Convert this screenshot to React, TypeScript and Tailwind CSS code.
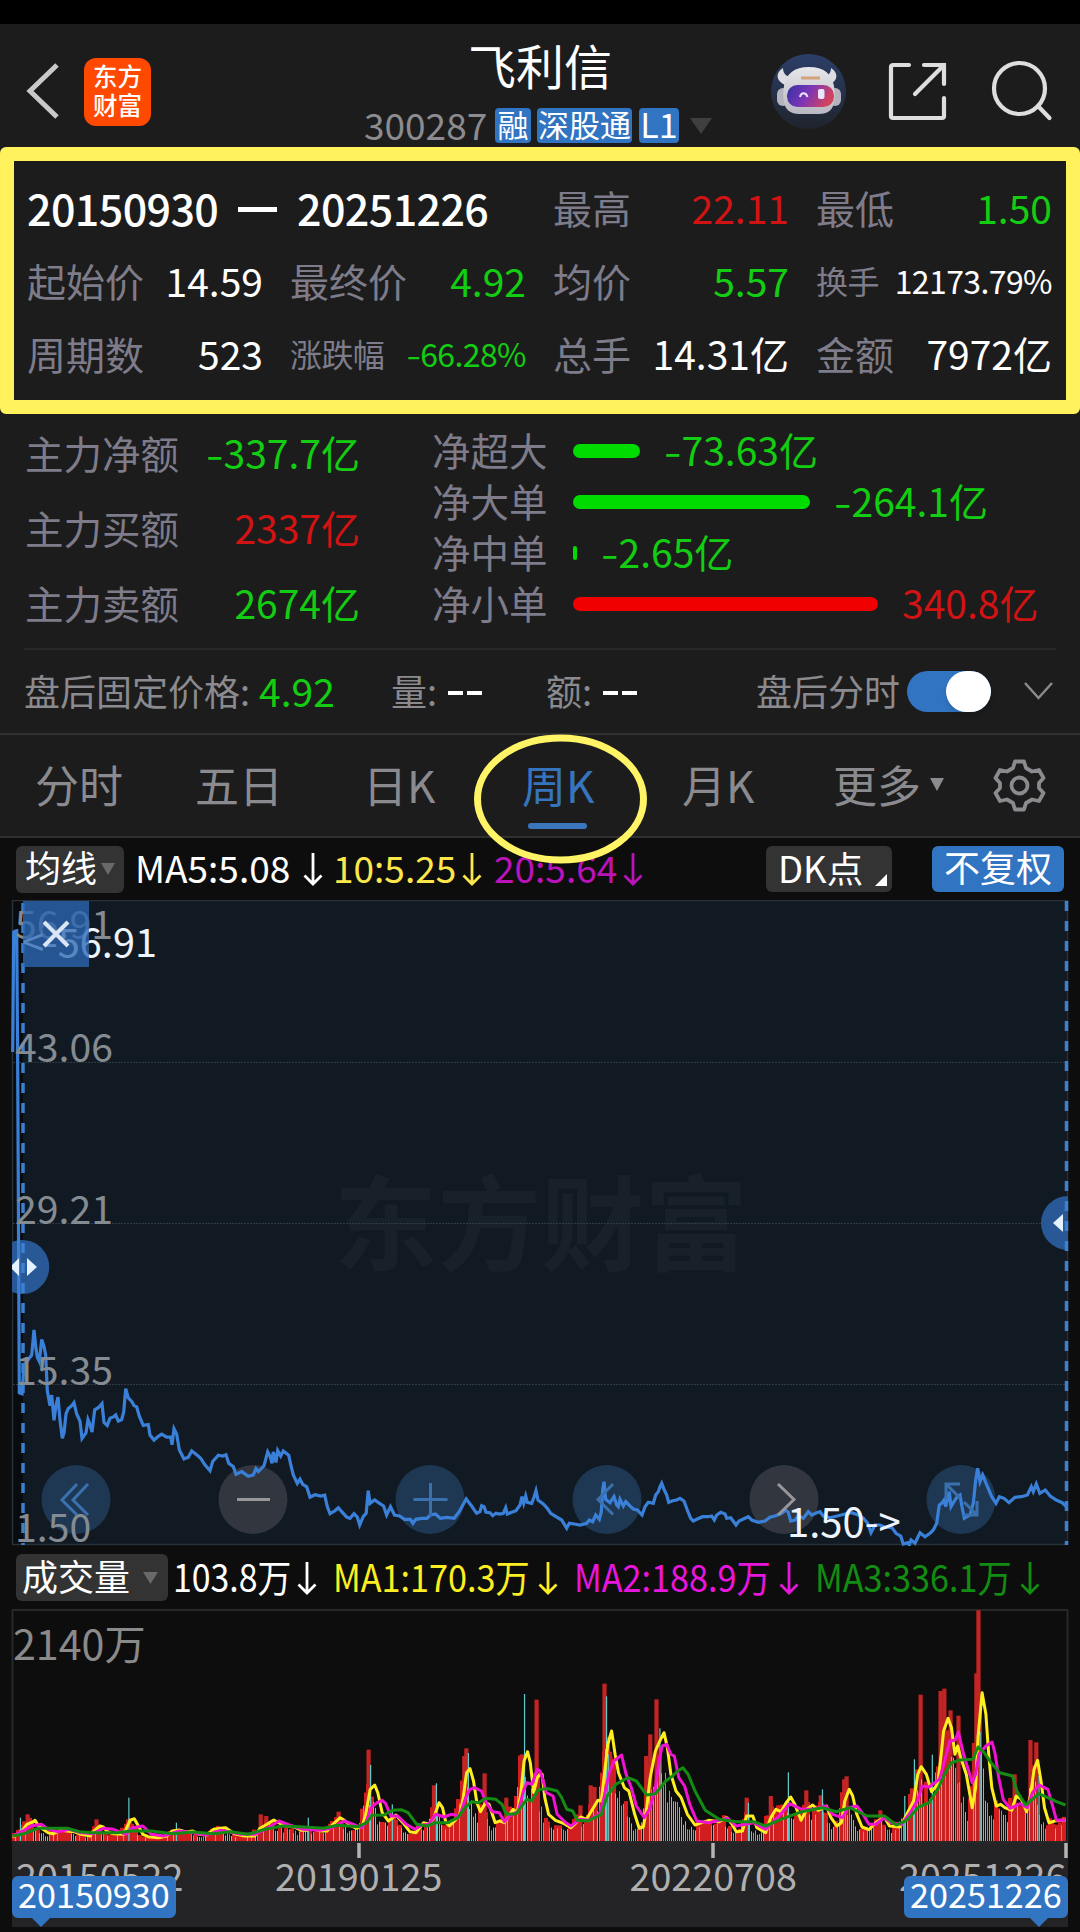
import React from 'react';

type Pt = [number, number];
type Segment = { ox: number; oy: number; sx: number; sy: number; data: number[] };

// every segment keeps its own origin and scale, this puts them all on the canvas
const toPoints = (segments: Segment[]): Pt[] => {
    const out: Pt[] = [];
    segments.forEach(s => {
        for (let i = 0; i < s.data.length; i += 2) {
            out.push([s.ox + s.data[i] / s.sx, s.oy + s.data[i + 1] / s.sy]);
        }
    });
    return out;
};

const toLine = (pts: Pt[]) => pts.map(p => `${p[0].toFixed(1)},${p[1].toFixed(1)}`).join(' ');

const price = toPoints([
    {
        ox: 0, oy: 890, sx: 3, sy: 2.376,
        data: [
            38, 385, 41, 100, 45, 98, 50, 97, 53, 420, 58, 1195, 66, 1197, 72, 1130, 80, 1120, 90, 1110, 95, 1105, 102, 1045, 108, 1090, 112, 1110,
            118, 1120, 125, 1068, 132, 1085, 137, 1105, 142, 1190, 150, 1225, 155, 1200, 162, 1260, 168, 1225, 174, 1205, 180, 1260, 187, 1303,
            192, 1290, 198, 1245, 205, 1232, 215, 1225, 222, 1218, 230, 1245, 240, 1262, 246, 1303, 258, 1290, 264, 1258, 270, 1270, 276, 1288,
            284, 1235, 295, 1230, 306, 1220, 312, 1265, 322, 1272, 330, 1255, 340, 1252, 347, 1247, 355, 1262, 365, 1258, 371, 1240, 377, 1185,
            385, 1207, 395, 1215, 402, 1225, 410, 1228, 418, 1250, 430, 1272, 445, 1270, 450, 1295, 462, 1307, 475, 1298, 485, 1293, 500, 1300,
            512, 1300, 516, 1318, 522, 1280, 530, 1293, 538, 1330, 552, 1352, 565, 1348, 575, 1333, 590, 1342, 602, 1350, 614, 1365, 630, 1380,
            638, 1358, 655, 1343, 668, 1345, 678, 1342, 686, 1362, 700, 1370, 708, 1388, 725, 1382, 745, 1393, 760, 1390, 768, 1375, 775, 1382,
            792, 1368, 803, 1335, 810, 1345, 816, 1362, 820, 1335, 828, 1360, 833, 1332, 842, 1345, 850, 1333, 866, 1343, 872, 1365, 880, 1390,
            892, 1410, 900, 1400, 908, 1412, 920, 1418, 930, 1443, 945, 1437, 962, 1440, 974, 1438, 982, 1465, 990, 1482, 1005, 1475, 1015, 1468,
            1025, 1477, 1040, 1490, 1050, 1493, 1062, 1482, 1072, 1490,
        ],
    },
    {
        ox: 300, oy: 1400, sx: 2.01, sy: 3,
        data: [
            120, 375, 127, 350, 133, 340, 137, 272, 141, 310, 150, 300, 160, 310, 168, 318, 174, 345, 182, 320, 190, 345, 200, 348, 210, 358,
            222, 358, 227, 370, 233, 358, 245, 355, 255, 355, 262, 345, 272, 342, 282, 355, 295, 352, 310, 355, 320, 335, 334, 297, 345, 318,
            355, 340,
        ],
    },
    {
        ox: 480, oy: 1440, sx: 3, sy: 3,
        data: [
            0, 215, 5, 197, 12, 200, 18, 217, 30, 218, 38, 227, 48, 220, 60, 222, 70, 220, 77, 203, 82, 222, 95, 217, 108, 212, 120, 195,
            126, 170, 131, 190, 137, 168, 142, 187, 155, 190, 162, 172, 168, 152, 174, 180, 190, 192, 202, 205, 212, 220, 228, 230, 245, 240,
            260, 265, 268, 250, 283, 252, 300, 255, 320, 250, 328, 240, 338, 245, 347, 225, 353, 232, 358, 238, 364, 215, 368, 150, 372, 125,
            377, 178, 390, 188, 402, 170, 410, 195, 415, 200, 420, 178, 430, 198, 437, 185, 450, 198, 460, 207, 472, 210, 486, 225, 495, 200,
            505, 187, 520, 190, 527, 165, 535, 155, 540, 140, 545, 130, 553, 150, 560, 165, 566, 187, 578, 182, 590, 180, 600, 175, 612, 183,
            622, 210, 632, 235, 640, 243, 652, 237, 668, 230, 685, 230, 695, 228, 703, 240, 710, 225, 722, 217, 735, 222, 740, 235, 752, 233,
            768, 255, 777, 243, 795, 235, 805, 230, 815, 240, 835, 247, 855, 243, 870, 232, 885, 228, 905, 220, 917, 210, 925, 217, 932, 243,
            945, 240, 955, 227, 970, 235, 985, 215, 995, 225, 1010, 218, 1020, 215, 1030, 228, 1050, 233, 1075, 227, 1095, 222, 1115, 218,
            1135, 225, 1150, 235, 1163, 250, 1173, 278, 1185, 255, 1200, 255, 1215, 262, 1235, 262, 1248, 280, 1262, 288, 1270, 312, 1283, 308,
            1288, 315, 1293, 300, 1305, 310, 1320, 278, 1335, 290, 1350, 280, 1360, 270, 1370, 250, 1378, 195, 1385, 190, 1392, 180, 1397, 200,
            1408, 155, 1413, 200, 1422, 185, 1432, 170, 1440, 165, 1446, 200, 1453, 235, 1470, 225, 1480, 190, 1487, 120, 1493, 85, 1500, 125,
            1508, 105, 1520, 135, 1535, 170, 1548, 190, 1558, 170,
        ],
    },
    {
        ox: 300, oy: 1400, sx: 2.01, sy: 3,
        data: [
            1415, 295, 1425, 308, 1437, 292, 1450, 290, 1462, 285, 1470, 260, 1474, 275, 1480, 252, 1487, 280, 1498, 270, 1508, 288,
            1520, 300, 1532, 308, 1541, 320,
        ],
    },
]);

// volume pane is split in a left and a right half
const volume = (left: number[], right: number[]) => toPoints([
    { ox: 0, oy: 1540, sx: 2.904, sy: 3, data: left },
    { ox: 540, oy: 1540, sx: 2.904, sy: 3, data: right },
]);

const ma1 = volume(
    [
        36, 888, 60, 875, 78, 850, 95, 843, 102, 838, 110, 852, 125, 865, 140, 875, 155, 878, 175, 868, 195, 870, 215, 872, 235, 880, 262, 885,
        275, 868, 290, 855, 300, 858, 312, 872, 330, 878, 360, 880, 368, 860, 378, 838, 390, 833, 402, 855, 415, 880, 430, 887, 460, 890,
        485, 885, 500, 870, 520, 867, 540, 873, 560, 870, 580, 880, 600, 882, 620, 865, 640, 862, 655, 860, 680, 878, 710, 885, 740, 885,
        755, 862, 775, 850, 795, 837, 815, 848, 835, 855, 855, 858, 875, 868, 890, 868, 905, 860, 930, 870, 950, 870, 965, 852, 988, 830,
        1000, 838, 1015, 852, 1035, 862, 1052, 855, 1062, 820, 1075, 745, 1088, 732, 1097, 755, 1110, 815, 1128, 840, 1150, 822, 1170, 845,
        1190, 872, 1208, 875, 1230, 845, 1245, 850, 1260, 830, 1275, 785, 1285, 800, 1295, 845, 1305, 855, 1320, 840, 1335, 820, 1345, 770,
        1355, 695, 1365, 683, 1375, 720, 1385, 785, 1395, 812, 1410, 785, 1420, 790, 1438, 845, 1452, 840, 1465, 845, 1478, 825, 1490, 805,
        1502, 815, 1512, 760, 1522, 660, 1532, 632, 1540, 665, 1550, 755, 1560, 710,
    ],
    [
        0, 700, 6, 700, 14, 770, 25, 820, 45, 838, 70, 848, 90, 860, 105, 845, 118, 828, 135, 835, 155, 800, 168, 778, 178, 780, 187, 700,
        197, 610, 208, 570, 218, 640, 228, 695, 245, 740, 258, 750, 275, 820, 288, 862, 300, 858, 310, 800, 320, 710, 335, 630, 348, 600,
        360, 575, 370, 620, 380, 700, 395, 750, 410, 770, 428, 820, 450, 852, 470, 845, 490, 838, 520, 842, 543, 830, 558, 850, 570, 872,
        588, 870, 600, 825, 618, 825, 630, 860, 655, 875, 670, 830, 685, 805, 700, 812, 715, 785, 728, 768, 740, 790, 758, 838, 775, 805,
        792, 792, 808, 808, 832, 795, 845, 830, 862, 855, 875, 845, 885, 780, 898, 745, 908, 765, 920, 820, 935, 858, 955, 866, 975, 845,
        1000, 828, 1015, 855, 1045, 858, 1060, 830, 1085, 780, 1097, 700, 1107, 677, 1122, 700, 1137, 752, 1155, 730, 1165, 640, 1172, 570,
        1185, 532, 1195, 560, 1205, 640, 1213, 615, 1222, 650, 1238, 700, 1255, 800, 1265, 740, 1272, 590, 1284, 455, 1295, 520, 1303, 640,
        1312, 740, 1325, 795, 1338, 790, 1350, 800, 1370, 808, 1383, 765, 1398, 775, 1413, 812, 1425, 760, 1435, 685, 1445, 658, 1455, 720,
        1465, 800, 1478, 845, 1495, 840, 1510, 838, 1526, 838,
    ],
);

const ma2 = volume(
    [
        36, 885, 70, 868, 90, 855, 120, 850, 140, 865, 170, 872, 200, 865, 235, 875, 270, 878, 300, 862, 330, 865, 365, 880, 385, 860,
        415, 855, 440, 880, 475, 885, 520, 870, 560, 875, 600, 882, 640, 868, 700, 880, 740, 880, 780, 860, 810, 840, 840, 852, 880, 865,
        930, 868, 960, 862, 1000, 840, 1050, 860, 1062, 845, 1078, 800, 1095, 785, 1110, 778, 1120, 788, 1135, 825, 1155, 825, 1180, 850,
        1205, 865, 1225, 852, 1245, 850, 1265, 820, 1290, 828, 1310, 820, 1335, 825, 1352, 770, 1365, 745, 1378, 740, 1398, 750, 1412, 785,
        1430, 812, 1450, 815, 1465, 842, 1480, 825, 1505, 810, 1520, 750, 1530, 725, 1545, 730, 1560, 685,
    ],
    [
        0, 690, 8, 715, 18, 755, 38, 765, 50, 820, 75, 845, 90, 855, 115, 835, 145, 838, 175, 815, 188, 760, 200, 700, 215, 660, 237, 642,
        250, 700, 265, 740, 280, 795, 303, 830, 320, 800, 335, 740, 345, 665, 355, 615, 368, 610, 380, 640, 390, 645, 403, 710, 420, 735,
        435, 790, 455, 840, 490, 845, 545, 832, 570, 855, 620, 845, 655, 865, 690, 830, 725, 788, 760, 805, 795, 805, 830, 795, 850, 820,
        878, 830, 895, 800, 920, 795, 935, 815, 955, 850, 975, 850, 1000, 830, 1020, 845, 1050, 850, 1075, 815, 1098, 775, 1110, 735,
        1130, 738, 1160, 715, 1175, 660, 1190, 600, 1205, 598, 1215, 573, 1230, 640, 1255, 725, 1265, 700, 1275, 640, 1295, 615, 1313, 603,
        1322, 640, 1332, 710, 1345, 775, 1365, 802, 1395, 788, 1415, 800, 1430, 755, 1450, 732, 1475, 745, 1490, 800, 1500, 838, 1526, 838,
    ],
);

const ma3 = volume(
    [
        36, 885, 70, 878, 110, 862, 150, 862, 195, 862, 230, 872, 270, 875, 340, 875, 380, 870, 440, 870, 500, 878, 560, 873, 620, 878,
        670, 872, 720, 880, 770, 865, 820, 855, 870, 857, 940, 862, 980, 853, 1040, 857, 1065, 845, 1080, 823, 1115, 822, 1140, 808,
        1165, 806, 1185, 815, 1210, 850, 1240, 855, 1265, 845, 1300, 845, 1330, 830, 1350, 800, 1370, 782, 1390, 785, 1410, 772, 1440, 775,
        1458, 790, 1470, 820, 1500, 818, 1515, 795, 1530, 775, 1545, 780, 1560, 750,
    ],
    [
        0, 745, 25, 743, 50, 750, 62, 768, 78, 805, 95, 810, 108, 838, 140, 840, 178, 820, 195, 765, 220, 730, 255, 710, 280, 720, 310, 762,
        335, 758, 365, 720, 385, 705, 400, 690, 415, 680, 430, 700, 450, 750, 480, 808, 520, 835, 570, 842, 620, 842, 655, 855, 700, 835,
        760, 812, 820, 800, 860, 812, 900, 800, 950, 825, 1000, 825, 1035, 852, 1065, 838, 1100, 798, 1130, 785, 1155, 745, 1175, 700,
        1195, 665, 1220, 657, 1257, 655, 1272, 618, 1290, 635, 1310, 665, 1335, 695, 1372, 705, 1385, 750, 1410, 792, 1430, 775, 1448, 758,
        1475, 770, 1500, 782, 1526, 792,
    ],
);

// weeks that stand out from the average
const redSpikes = volume(
    [80, 820, 280, 835, 757, 820, 773, 825, 983, 812, 1070, 626, 1260, 733, 1348, 645, 1354, 622, 1407, 697, 1470, 770, 1516, 640, 1558, 476],
    [
        117, 793, 147, 733, 158, 738, 187, 428, 204, 645, 308, 645, 320, 580, 338, 475, 600, 770, 670, 765, 773, 748, 815, 763, 883, 715,
        890, 706, 988, 808, 1080, 742, 1105, 461, 1163, 450, 1174, 443, 1192, 508, 1215, 524, 1260, 606, 1267, 397, 1273, 208, 1378, 700,
        1424, 597, 1441, 604,
    ],
);
const cyanSpikes = volume(
    [59, 830, 374, 770, 512, 845, 895, 830, 1076, 672, 1139, 790, 1267, 727, 1360, 636, 1523, 459],
    [193, 466, 198, 640, 348, 562, 605, 785, 721, 694, 820, 745, 1059, 765, 1087, 655, 1139, 641, 1278, 572, 1449, 705],
);

const valueAt = (pts: Pt[], x: number) => {
    for (let i = 1; i < pts.length; i++) {
        if (x <= pts[i][0]) {
            const [x0, y0] = pts[i - 1];
            const [x1, y1] = pts[i];
            return y0 + ((y1 - y0) * (x - x0)) / (x1 - x0 || 1);
        }
    }
    return pts[pts.length - 1][1];
};

const noise = (i: number) => {
    const n = Math.sin(i * 12.9898) * 43758.5453;
    return n - Math.floor(n);
};

const bars = Array.from({ length: 526 }, (_, i) => {
    const x = 13 + i * 2;
    const now = 1840 - valueAt(ma1, x);
    const next = 1840 - valueAt(ma1, x + 5);
    const rising = next - now > -1;
    const red = noise(i) < (rising ? 0.62 : 0.3);
    const h = next * (red ? 0.78 + noise(i + 700) * 0.4 : 0.55 + noise(i + 300) * 0.4);
    return { x, h, red };
});

const Arrow = ({ className = "" }: { className?: string }) => (
    <svg className={`h-[34px] w-5 shrink-0 ${className}`} viewBox="0 0 20 34" fill="none" stroke="currentColor" strokeWidth="2.8">
        <path d="M10 1v31M1.5 23.5L10 32l8.5-8.5" />
    </svg>
);

const Down = ({ className = "" }: { className?: string }) => (
    <svg className={`shrink-0 ${className}`} viewBox="0 0 20 16" preserveAspectRatio="none" fill="currentColor">
        <path d="M0 0h20L10 16z" />
    </svg>
);

// negative numbers get a slightly wider minus sign
const Amount = ({ text, className = "" }: { text: string; className?: string }) => (
    <span className={className}>
        {text.startsWith("-") && <span className="mx-0.5 inline-block scale-x-[1.3]">-</span>}
        {text.replace("-", "")}
    </span>
);

const Header = () => (
    <header className="flex h-[123px] items-start">
        <svg className="ml-[26px] mt-[39px] h-[56px] w-[33px]" viewBox="0 0 33 56" fill="none" stroke="#c9c9c9" strokeWidth="5">
            <path d="M31 2L4 28l27 26" />
        </svg>
        <div className="ml-[25px] mt-[34px] flex h-[68px] w-[67px] flex-col items-center justify-center rounded-xl bg-[#ff4800] pb-1 text-[24.5px] font-medium leading-[29px] text-white">
            <span>东方</span>
            <span>财富</span>
        </div>
        <div className="ml-[213px] flex w-[348px] flex-col">
            <h1 className="ml-1 mt-[10px] text-center text-[48px] leading-[60px] text-white">飞利信</h1>
            <div className="mt-[14px] flex h-[35px] items-center text-[#8b8b90]">
                <span className="w-[131px] pb-1 text-[37px] leading-[34px]">300287</span>
                <span className="flex h-[35px] w-9 justify-center rounded bg-[#3174c1] text-[31px] leading-[31px] text-white">融</span>
                <span className="ml-1.5 flex h-[35px] w-[95px] justify-center rounded bg-[#3174c1] text-[31px] leading-[31px] text-white">深股通</span>
                <span className="ml-[7px] flex h-[35px] w-10 justify-center rounded bg-[#3174c1] text-[34px] leading-[31px] text-white">L1</span>
                <Down className="ml-[11px] h-4 w-[22px] text-[#3f3f40]" />
            </div>
        </div>
        <svg className="ml-[59px] mt-[30px] size-[75px]" viewBox="0 0 75 75">
            <defs>
                <linearGradient id="sky" x1="0" y1="0" x2="0" y2="1">
                    <stop offset="0" stopColor="#2c3f68" />
                    <stop offset="1" stopColor="#1f242d" />
                </linearGradient>
                <linearGradient id="shell" x1="0" y1="0" x2="0" y2="1">
                    <stop offset="0" stopColor="#e6e6ea" />
                    <stop offset="1" stopColor="#b9b8c2" />
                </linearGradient>
                <linearGradient id="visor" x1="0" y1="0" x2="1" y2="0.3">
                    <stop offset="0" stopColor="#3532a0" />
                    <stop offset="0.5" stopColor="#7a35b8" />
                    <stop offset="1" stopColor="#d04460" />
                </linearGradient>
            </defs>
            <circle cx="37.5" cy="37.5" r="37.5" fill="url(#sky)" />
            <path d="M12 14c-8 5-7 13 2 17l7-8c-6 0-9-4-9-9zM60 14c8 5 7 13-2 17l-7-8c6 0 9-4 9-9z" fill="#dcdce2" />
            <rect x="6" y="34" width="12" height="18" rx="6" fill="#b4b4be" />
            <rect x="58" y="34" width="12" height="18" rx="6" fill="#b4b4be" />
            <path d="M38 13c-15 0-23 7-25 19-1 6-1 12 0 16 1 8 7 12 15 12h20c9 0 14-4 15-12 1-5 1-10 0-16-2-12-10-19-25-19z" fill="url(#shell)" />
            <rect x="16" y="31" width="47" height="22" rx="10.500" fill="url(#visor)" />
            <path d="M30 24h19" stroke="#d6a27c" strokeWidth="3" />
            <path d="M29 43c1-5 6-5 7.500 0" fill="none" stroke="#e8e4ff" strokeWidth="2" />
            <rect x="47" y="35" width="6.500" height="10" rx="2" fill="#eae6ff" />
        </svg>
        <svg className="ml-[41px] mt-[38px] h-[60px] w-[61px]" viewBox="0 0 61 60" fill="none" stroke="#dedede" strokeWidth="4.200" strokeLinecap="round">
            <path d="M22 3H6a2 2 0 00-2 2v49a2 2 0 002 2h49a2 2 0 002-2V36" />
            <path d="M37 3h20v19M57 3L28 32" />
        </svg>
        <svg className="ml-[41px] mt-[34px] h-[68px] w-[68px]" viewBox="0 0 68 68" fill="none" stroke="#dedede" strokeWidth="4.200" strokeLinecap="round">
            <circle cx="30.500" cy="30.500" r="25.500" />
            <path d="M49 48l11.500 12" />
        </svg>
    </header>
);

type StatProps = { label: string; value: string; color?: string; small?: boolean };

const Stat = ({ label, value, color = "text-white", small }: StatProps) => (
    <div className={`flex items-baseline justify-between whitespace-nowrap leading-[73px] ${small ? "text-[32px] tracking-[-0.6px]" : "text-[39px]"}`}>
        <span className="text-[#7e7c8a]">{label}</span>
        <Amount text={value} className={color} />
    </div>
);

const Summary = () => (
    <section className="h-[267px] rounded-md border-[14px] border-[#fff25c]">
        <div className="grid grid-cols-4 gap-x-[27px] pl-[13px] pr-[14px] pt-[10px]">
            <div className="col-span-2 flex items-center text-[43px] font-medium leading-[73px] tracking-[-0.6px] text-white">
                <span className="w-[211px]">20150930</span>
                <span className="mt-[3px] h-[5px] w-[39px] bg-white" />
                <span className="ml-5">20251226</span>
            </div>
            <Stat label="最高" value="22.11" color="text-[#d21313]" />
            <Stat label="最低" value="1.50" color="text-[#13cd13]" />
            <Stat label="起始价" value="14.59" />
            <Stat label="最终价" value="4.92" color="text-[#13cd13]" />
            <Stat label="均价" value="5.57" color="text-[#13cd13]" />
            <Stat label="换手" value="12173.79%" small />
            <Stat label="周期数" value="523" />
            <Stat label="涨跌幅" value="-66.28%" color="text-[#13cd13]" small />
            <Stat label="总手" value="14.31亿" />
            <Stat label="金额" value="7972亿" />
        </div>
    </section>
);

const mainFlows = [
    { label: "主力净额", value: "-337.7亿", color: "text-[#13cd13]" },
    { label: "主力买额", value: "2337亿", color: "text-[#d21313]" },
    { label: "主力卖额", value: "2674亿", color: "text-[#13cd13]" },
];

const orderFlows = [
    { label: "净超大", value: "-73.63亿", width: 67, color: "text-[#13cd13]", bar: "bg-[#00dc00]" },
    { label: "净大单", value: "-264.1亿", width: 237, color: "text-[#13cd13]", bar: "bg-[#00dc00]" },
    { label: "净中单", value: "-2.65亿", width: 4, color: "text-[#13cd13]", bar: "bg-[#00dc00]" },
    { label: "净小单", value: "340.8亿", width: 305, color: "text-[#d21313]", bar: "bg-[#f00000]" },
];

const Flows = () => (
    <section className="flex h-[234px] pt-px text-[38.5px]">
        <div className="ml-[25px] w-[335px]">
            {mainFlows.map(f => (
                <div key={f.label} className="flex h-[75px] justify-between leading-[75px]">
                    <span className="text-[#7e7c8a]">{f.label}</span>
                    <Amount text={f.value} className={`text-[39px] ${f.color}`} />
                </div>
            ))}
        </div>
        <div className="ml-[72px] mt-[9px]">
            {orderFlows.map(f => (
                <div key={f.label} className="flex h-[51px] items-center leading-[51px]">
                    <span className="w-[141px] text-[#7e7c8a]">{f.label}</span>
                    <span className={`mt-[3px] h-3.5 rounded-full ${f.bar}`} style={{ width: f.width }} />
                    <Amount text={f.value} className={`ml-6 text-[39px] ${f.color}`} />
                </div>
            ))}
        </div>
    </section>
);

const Dashes = ({ className = "" }: { className?: string }) => (
    <span className={`flex gap-1 pt-1.5 ${className}`}>
        <i className="h-[3.5px] w-[15px] bg-white" />
        <i className="h-[3.5px] w-[15px] bg-white" />
    </span>
);

const AfterHours = () => (
    <section className="mx-6 flex h-[85px] items-center border-t-2 border-[#272728] pb-[3px] text-[36px] leading-[80px] text-[#8a8a8f]">
        <span className="w-[235px] whitespace-nowrap">盘后固定价格:</span>
        <span className="w-[132px] text-[39px] text-[#13cd13]">4.92</span>
        <span className="w-[57px]">量:</span>
        <Dashes className="w-[98px]" />
        <span className="w-[57px]">额:</span>
        <Dashes className="w-[153px]" />
        <span className="w-[151px] whitespace-nowrap">盘后分时</span>
        <span className="mt-0.5 flex h-[41px] w-[84px] justify-end rounded-full bg-[#3174c1]">
            <span className="h-[41px] w-[45px] rounded-full bg-white shadow-md" />
        </span>
        <svg className="ml-[33px] mt-0.5 h-[18px] w-[29px]" viewBox="0 0 29 18" fill="none" stroke="#8a8a8f" strokeWidth="2.500">
            <path d="M1 1l13.500 15L28 1" />
        </svg>
    </section>
);

const Tabs = () => (
    <nav className="relative flex h-[105px] border-y-2 border-[#303031] text-[44px] leading-[99px] text-[#8a8a8f]">
        <span className="ml-[35px] w-[160px]">分时</span>
        <span className="w-[168px]">五日</span>
        <span className="w-[159px]">日K</span>
        <span className="flex w-[160px] flex-col text-[#3674bd]">
            周K
            <span className="-mt-[11px] ml-[6px] h-1.5 w-[59px] rounded-full bg-[#3b75bb]" />
        </span>
        <span className="w-[151px]">月K</span>
        <span className="w-[97px]">更多</span>
        <Down className="mt-[43px] h-[13px] w-[14px]" />
        <svg className="ml-[49px] mt-6 h-[53px] w-[53px]" viewBox="0 0 53 53" fill="none" stroke="#8a8a8f" strokeWidth="3.800" strokeLinejoin="round">
            <path d="M22 2.500h9l2 6.500 6 3.500 7-1.500 4.500 8-4.500 5v5l4.500 5-4.500 8-7-1.500-6 3.500-2 6.500h-9l-2-6.500-6-3.500-7 1.500-4.500-8 4.500-5v-5l-4.500-5 4.500-8 7 1.500 6-3.500z" />
            <circle cx="26.500" cy="26.500" r="8" />
        </svg>
        {/* hand drawn marker round the weekly tab */}
        <svg className="absolute left-[473px] -top-px z-10 h-[130px] w-[175px]" viewBox="0 0 175 130" fill="none" stroke="#fff366" strokeWidth="7">
            <ellipse cx="87.500" cy="65" rx="83" ry="61" />
        </svg>
    </nav>
);

const PriceLegend = () => (
    <div className="flex h-[62px] items-center text-[37px] leading-[46px] text-white">
        <span className="ml-4 flex h-[47px] w-[108px] items-center rounded-md bg-[#333334] pl-[9px] text-[36px]">
            <span className="-mt-1.5 w-[76px]">均线</span>
            <Down className="h-3 w-[14px] text-[#69696a]" />
        </span>
        <span className="-mt-1 ml-[11px] w-[168px]">MA5:5.08</span>
        <Arrow className="w-[20px]" />
        <span className="-mt-1 ml-[10px] w-[129px] text-[#fbe74c]">10:5.25</span>
        <Arrow className="w-[20px] text-[#fbe74c]" />
        <span className="-mt-1 ml-3 w-[129px] text-[#b913b9]">20:5.64</span>
        <Arrow className="w-[20px] text-[#b913b9]" />
        <span className="ml-[123px] flex h-[46px] w-[126px] items-end rounded-md bg-[#333334] pl-[12px] text-[36.5px]">
            <span className="w-[97px] leading-[48px]">DK点</span>
            <svg className="mb-1.5 size-3" viewBox="0 0 12 12" fill="#fff"><path d="M12 0v12H0z" /></svg>
        </span>
        <span className="ml-10 h-[46px] w-[132px] rounded-md bg-[#3174c1] text-center text-[36px] leading-[41px]">不复权</span>
    </div>
);

const roundButtons = [
    { cx: 76, fill: "#1e3853", stroke: "#3a70ae", d: "M77 1484l-15 16 15 15M88 1484l-15 16 15 15" },
    { cx: 253, fill: "#32363f", stroke: "#97979a", d: "M237 1499.500h33" },
    { cx: 430, fill: "#1e3853", stroke: "#3a70ae", d: "M413.500 1499.500h34M430.500 1483v33" },
    { cx: 607, fill: "#1e3853", stroke: "#3a70ae", d: "M613 1484l-15 15.500 15 15" },
    { cx: 784, fill: "#32363f", stroke: "#97979a", d: "M778 1484l16 15.500-16 15.500" },
    { cx: 961, fill: "#1e3853", stroke: "#3a70ae", d: "M960 1484h-14v15M946 1484l14 14M964 1502l13 13M977 1501v14h-14" },
];

const PriceChart = () => (
    <svg className="block h-[646px] w-[1080px]" viewBox="0 900 1080 646">
        <rect x="12" y="900" width="1056" height="645" fill="#090c0f" />
        <rect x="23" y="900" width="1044" height="645" fill="#111a23" />
        <text x="334" y="1263" fontSize="103.500" fontWeight="700" fill="#18202a">东方财富</text>
        <path d="M13 1062.500H1067M13 1223.500H1067M13 1384.500H1067" stroke="#303a42" strokeWidth="1" strokeDasharray="2 1" />
        <rect x="12.500" y="900.500" width="1055" height="644" fill="none" stroke="#293138" strokeWidth="1.500" />
        <path d="M12 1242a27 27 0 1 1 0 50z" fill="#285996" />
        <path d="M1068 1196a27 27 0 0 0 0 54z" fill="#285996" />
        {roundButtons.map(b => <circle key={b.cx} cx={b.cx} cy="1499.500" r="34.500" fill={b.fill} />)}
        <path d="M23 903v642M1066.500 901v644" stroke="#3d7fd0" strokeWidth="3.500" strokeDasharray="10 10" />
        <polyline points={toLine(price)} fill="none" stroke="#3a80d8" strokeWidth="3.200" />
        {roundButtons.map(b => <path key={b.cx} d={b.d} fill="none" stroke={b.stroke} strokeWidth="3" />)}
        <g fill="#858b92" fontSize="39.200">
            <text x="15" y="1061.500">43.06</text>
            <text x="15" y="1223.500">29.21</text>
            <text x="15" y="1384.500">15.35</text>
            <text x="15" y="1542">1.50</text>
            <text x="15" y="939">56.91</text>
        </g>
        <text x="22" y="957" fontSize="39.700" fill="#eef4fc">&lt;-56.91</text>
        <rect x="23" y="901" width="66" height="66" fill="#2c67b4" fillOpacity="0.780" />
        <path d="M44 922l24 24M68 922l-24 24" stroke="#dbe6f5" strokeWidth="4" />
        <path d="M19 1258v18l-9-9zM27 1258v18l10-9z" fill="#e4f1ff" />
        <path d="M1063 1214v18l-10-9z" fill="#e4f1ff" />
        <text x="787" y="1537" fontSize="40" fill="#eef4fc">1.50-&gt;</text>
        <rect x="0" y="1200" width="12" height="120" fill="#0d0d0d" />
    </svg>
);

const VolumeLegend = () => (
    <div className="flex h-[63px] items-center text-[38px] leading-[46px] text-white">
        <span className="ml-4 flex h-[47px] w-[152px] items-center rounded-md bg-[#333334] pl-[6px] text-[36px]">
            <span className="-mt-1.5 w-[121px]">成交量</span>
            <Down className="h-3 w-[15px] text-[#69696a]" />
        </span>
        <span className="-mt-1 ml-[5px] w-[124px] origin-left scale-x-[0.89] whitespace-nowrap">103.8万</span>
        <Arrow />
        <span className="-mt-1 ml-4 w-[205px] origin-left scale-x-[0.9] whitespace-nowrap text-[#fdee21]">MA1:170.3万</span>
        <Arrow className="text-[#fdee21]" />
        <span className="-mt-1 ml-4 w-[205px] origin-left scale-x-[0.9] whitespace-nowrap text-[#e815dc]">MA2:188.9万</span>
        <Arrow className="text-[#e815dc]" />
        <span className="-mt-1 ml-4 w-[205px] origin-left scale-x-[0.9] whitespace-nowrap text-[#128c12]">MA3:336.1万</span>
        <Arrow className="text-[#128c12]" />
    </div>
);

const VolumeChart = () => (
    <svg className="block h-[324px] w-[1080px]" viewBox="0 1608 1080 324">
        <rect x="12.500" y="1609" width="1055" height="232" fill="none" stroke="#2b2b2c" strokeWidth="1.800" />
        <text x="13" y="1659" fontSize="41.200" fill="#8a8a8b">2140万</text>
        {bars.filter(b => b.red).map(b => <rect key={b.x} x={b.x - 1} y={1840 - b.h} width="4" height={b.h} fill="#d21e1e" />)}
        {redSpikes.map(([x, y]) => <rect key={x} x={x - 2} y={y} width="4.200" height={1840 - y} fill="#c42424" />)}
        {bars.filter(b => !b.red).map(b => (
            <rect key={b.x} x={b.x} y={1840 - b.h} width="1" height={b.h} fill={noise(b.x) > 0.4 ? "#62cccc" : "#b98a80"} />
        ))}
        {cyanSpikes.map(([x, y]) => <rect key={x} x={x - 0.5} y={y} width="1.200" height={1840 - y} fill="#62cccc" />)}
        <g fill="none" strokeWidth="3" strokeLinejoin="round">
            <polyline points={toLine(ma1)} stroke="#ffee1f" />
            <polyline points={toLine(ma2)} stroke="#f212d2" />
            <polyline points={toLine(ma3)} stroke="#148c14" />
        </g>
        <rect x="12" y="1842" width="1056" height="84" fill="#242426" />
        <path d="M359 1842v15M713 1842v15M1066 1842v15" stroke="#b4b4b4" strokeWidth="3.500" />
        <g fontSize="37.700" fill="#b0b0b0">
            <text x="16" y="1890">20150522</text>
            <text x="275" y="1890">20190125</text>
            <text x="629.500" y="1890">20220708</text>
            <text x="899" y="1890">20251226</text>
        </g>
        <path d="M18 1875H170a6 6 0 016 6v30a6 6 0 01-6 6H50l-9 9-9-9H18a6 6 0 01-6-6v-30a6 6 0 016-6z" fill="#3174c1" />
        <path d="M910 1875h152a6 6 0 016 6v30a6 6 0 01-6 6h-14l-9 9-9-9H910a6 6 0 01-6-6v-30a6 6 0 016-6z" fill="#3174c1" />
        <g fontSize="34.200" fill="#fff">
            <text x="18" y="1907">20150930</text>
            <text x="910" y="1907">20251226</text>
        </g>
    </svg>
);

const App = () => {
    return (
        <div className="h-[1932px] w-[1080px] overflow-hidden bg-[#0d0d0d] font-['Noto_Sans_CJK_SC',sans-serif]">
            <div className="h-6 bg-black" />
            <div className="bg-[#1c1c1c]">
                <Header />
                <Summary />
                <Flows />
                <AfterHours />
                <Tabs />
            </div>
            <PriceLegend />
            <PriceChart />
            <VolumeLegend />
            <VolumeChart />
        </div>
    );
};

export default App;
